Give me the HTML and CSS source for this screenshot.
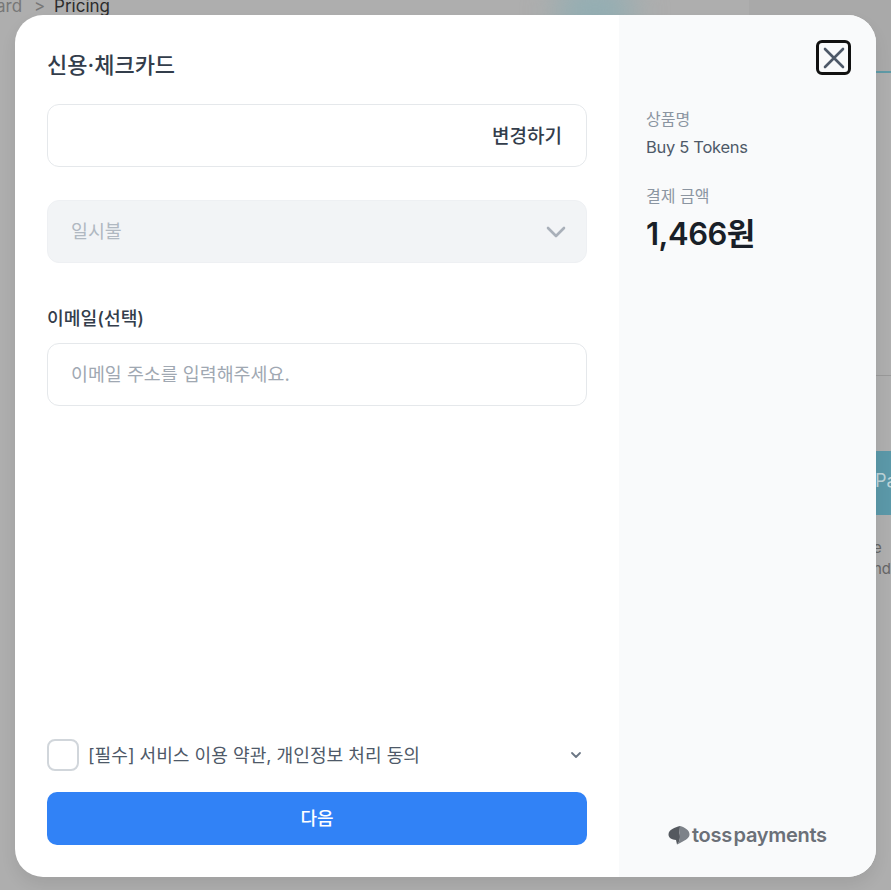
FILE: index.html
```html
<!DOCTYPE html>
<html lang="ko">
<head>
    <meta charset="UTF-8">
    <meta name="viewport" content="width=device-width, initial-scale=1.0">
    <title>Pricing</title>
    <link rel="stylesheet" href="styles.css">
</head>
<body>
    <!-- Page behind the overlay -->
    <div class="backdrop">
        <div class="crumbs"><span class="crumb-prev">ard</span><span class="crumb-sep">&gt;</span><span class="crumb-now">Pricing</span></div>
        <div class="bg-glow"></div>
        <div class="bg-panel-top"></div>
        <div class="bg-teal-line"></div>
        <div class="bg-line"></div>
        <div class="bg-pay">Pa</div>
        <div class="bg-note">e<br>nd</div>
    </div>

    <div class="modal">
        <div class="pay-form">
            <h2 class="method-title">신용·체크카드</h2>
            <div class="field card-field">
                <span class="change-link">변경하기</span>
            </div>
            <div class="field select-field">
                <span>일시불</span>
                <svg class="select-arrow" width="20" height="12" viewBox="0 0 20 12">
                    <path d="M2 2l8 8 8-8" fill="none" stroke="#a9b0b9" stroke-width="2.6" stroke-linecap="round" stroke-linejoin="round"/>
                </svg>
            </div>
            <label class="field-label">이메일(선택)</label>
            <div class="field email-field">이메일 주소를 입력해주세요.</div>

            <div class="agree-row">
                <span class="checkbox"></span>
                <span class="agree-text">[필수] 서비스 이용 약관, 개인정보 처리 동의</span>
                <svg class="agree-arrow" width="12" height="8" viewBox="0 0 12 8">
                    <path d="M2 2l4 4 4-4" fill="none" stroke="#6b7684" stroke-width="1.8" stroke-linecap="round" stroke-linejoin="round"/>
                </svg>
            </div>
            <button class="next-btn" type="button">다음</button>
        </div>

        <div class="summary">
            <button class="close-btn" type="button">
                <svg width="24" height="24" viewBox="0 0 24 24">
                    <path d="M3 3l18 18M21 3L3 21" fill="none" stroke="#4e5968" stroke-width="2.6" stroke-linecap="round"/>
                </svg>
            </button>
            <div class="sum-label first">상품명</div>
            <div class="sum-value">Buy 5 Tokens</div>
            <div class="sum-label second">결제 금액</div>
            <div class="sum-price">1,466원</div>
            <div class="toss-logo">
                <svg width="22" height="20" viewBox="0 0 22 20">
                    <path d="M12 1C7 2.500 0.500 4.500 0.500 9.500c0 3.500 3.500 5 7.500 5.500l1 4.500C12 17 12.500 12 11.500 8z" fill="#55595f"/>
                    <path d="M12 1c5 1.500 9.500 4 9.500 8.500 0 4-5.500 6.500-12.500 10 3-3.500 3.500-7.500 2.500-11.500z" fill="#7d8289"/>
                </svg>
                <span class="toss-name">toss payments</span>
            </div>
        </div>
    </div>
</body>
</html>
```

FILE: styles.css
```css
* {
    box-sizing: border-box;
}

html, body {
    height: 100%;
}

body {
    margin: 0;
    padding: 15px;
    height: 890px;
    overflow: hidden;
    background-color: #aeaeae;
    font-family: Inter, "Noto Sans CJK KR", sans-serif;
    color: #333d4b;
}

/* Page behind the overlay */
.backdrop {
    position: absolute;
    top: 0;
    left: 0;
    width: 891px;
    height: 890px;
    overflow: hidden;
}

.crumbs {
    position: absolute;
    top: -4px;
    left: -4px;
    display: flex;
    gap: 11px;
    font-size: 17px;
    line-height: 20px;
}

.crumb-prev,
.crumb-sep {
    color: #777;
}

.crumb-sep {
    width: 8px;
    margin-left: 1px;
    margin-right: 1px;
}

.crumb-now {
    color: #2c2c2c;
}

.bg-glow {
    position: absolute;
    top: -20px;
    left: 555px;
    width: 80px;
    height: 60px;
    border-radius: 50%;
    background: #93aeb3;
    filter: blur(16px);
}

.bg-panel-top {
    position: absolute;
    top: 0;
    left: 749px;
    width: 142px;
    height: 72px;
    background: #a9a9a9;
}

.bg-teal-line {
    position: absolute;
    top: 71px;
    left: 876px;
    width: 15px;
    height: 2px;
    background: #5f9aa6;
}

.bg-line {
    position: absolute;
    top: 375px;
    left: 876px;
    width: 15px;
    height: 1px;
    background: #999;
}

.bg-pay {
    position: absolute;
    top: 451px;
    left: 875px;
    width: 40px;
    height: 64px;
    background: #5b98a8;
    color: #bdd3d8;
    font-size: 18px;
    line-height: 60px;
}

.bg-note {
    position: absolute;
    top: 537px;
    left: 873px;
    font-size: 15px;
    line-height: 21px;
    color: #666;
    white-space: nowrap;
}

/* Modal */
.modal {
    position: relative;
    display: flex;
    width: 861px;
    height: 862px;
    border-radius: 28px;
    overflow: hidden;
    background: #fff;
    box-shadow: 0 8px 16px rgba(0, 0, 0, 0.08);
}

.pay-form {
    display: flex;
    flex-direction: column;
    width: 604px;
    padding: 36px 32px 32px 32px;
}

.method-title {
    margin: 0 0 25px;
    font-size: 22px;
    line-height: 28px;
    font-weight: 500;
    color: #333d4b;
}

.field {
    display: flex;
    align-items: center;
    height: 63px;
    padding: 0 24px 3px 23px;
    border: 1px solid #e5e8eb;
    border-radius: 12px;
    font-size: 18.4px;
}

.card-field {
    justify-content: flex-end;
    margin-bottom: 33px;
}

.change-link {
    font-size: 19px;
    font-weight: 500;
    color: #333d4b;
}

.select-field {
    justify-content: space-between;
    padding-right: 20px;
    margin-bottom: 42px;
    background: #f2f4f6;
    border-color: #eef0f3;
    color: #b0b8c1;
}

.select-arrow {
    margin-top: 3px;
}

.field-label {
    margin-bottom: 12px;
    font-size: 18.2px;
    line-height: 26px;
    font-weight: 500;
    color: #333d4b;
}

.email-field {
    color: #a0a8b2;
}

.agree-row {
    display: flex;
    align-items: center;
    gap: 9px;
    margin-top: auto;
    margin-bottom: 21px;
}

.checkbox {
    width: 32px;
    height: 32px;
    border: 2px solid #d1d6db;
    border-radius: 8px;
}

.agree-text {
    flex: 1;
    margin-top: -3px;
    font-size: 18.1px;
    color: #4e5968;
}

.agree-arrow {
    margin-right: 5px;
}

.next-btn {
    height: 53px;
    padding: 0 0 4px;
    border: none;
    border-radius: 10px;
    background-color: #3182f6;
    color: #fff;
    font-family: inherit;
    font-size: 18px;
    font-weight: 500;
}

/* Order summary */
.summary {
    position: relative;
    display: flex;
    flex-direction: column;
    flex: 1;
    padding: 92px 24px 30px 27px;
    background: #f9fafb;
}

.close-btn {
    position: absolute;
    top: 25px;
    right: 25px;
    display: flex;
    align-items: center;
    justify-content: center;
    width: 35px;
    height: 35px;
    padding: 0;
    border: 3px solid #111;
    border-radius: 6px;
    background: transparent;
}

.sum-label {
    font-size: 16px;
    line-height: 24px;
    color: #8b95a1;
}

.sum-value {
    margin-top: 4px;
    font-size: 16.5px;
    line-height: 24px;
    letter-spacing: -0.3px;
    color: #4e5968;
}

.sum-label.second {
    margin-top: 25px;
}

.sum-price {
    margin-top: 5px;
    font-size: 31px;
    line-height: 42px;
    font-weight: 600;
    letter-spacing: -0.5px;
    color: #191f28;
}

.toss-logo {
    display: flex;
    align-items: center;
    gap: 2px;
    margin-top: auto;
    margin-left: 22px;
}

.toss-name {
    font-family: Inter, sans-serif;
    font-size: 20px;
    line-height: 24px;
    font-weight: 600;
    letter-spacing: -0.3px;
    word-spacing: -3px;
    color: #6b7078;
    white-space: nowrap;
}
```
